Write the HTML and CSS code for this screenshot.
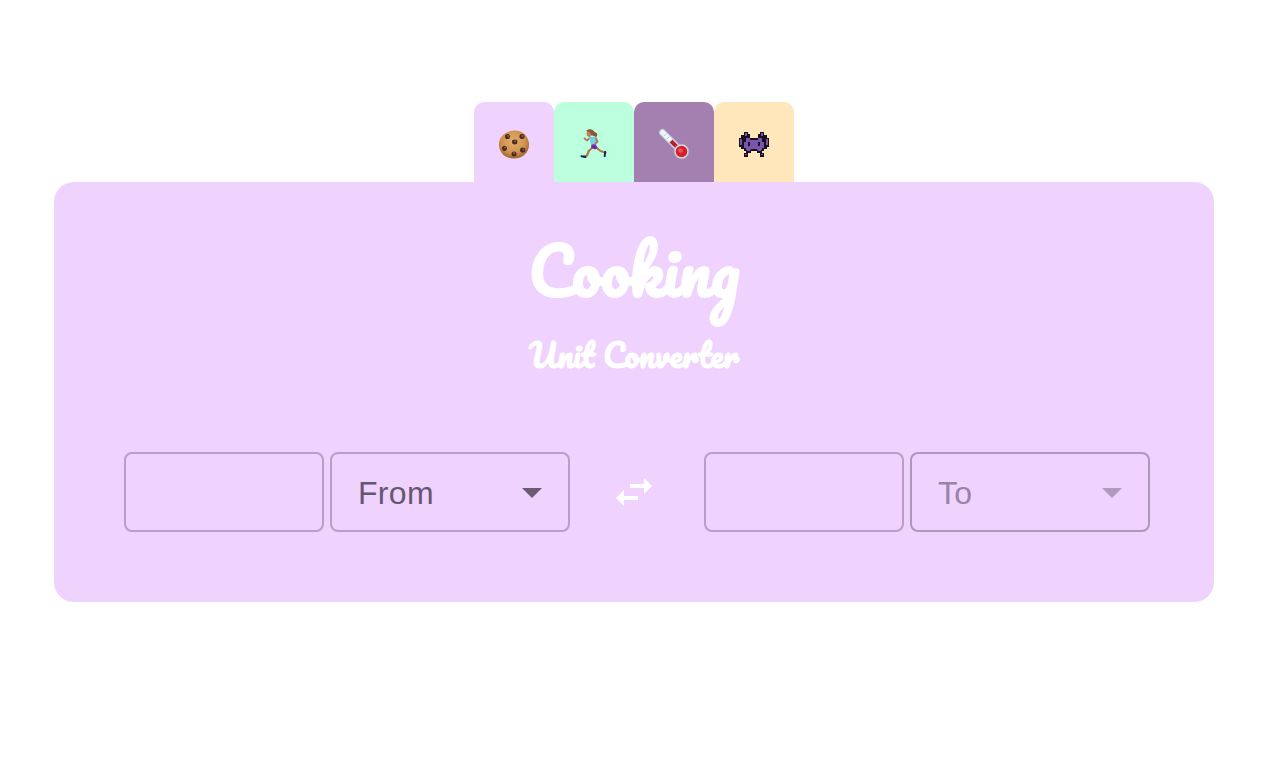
FILE: index.html
```html
<!DOCTYPE html>
<html lang="en">
<head>
<meta charset="utf-8">
<title>Unit Converter</title>
<link rel="stylesheet" href="styles.css">
</head>
<body>
<main class="app">
  <nav class="tabs">
    <button class="tab tab-cooking" aria-label="Cooking">
      <svg viewBox="0 0 40 40">
        <defs><radialGradient id="dough" cx=".48" cy=".4" r=".6"><stop offset="0" stop-color="#e2ae6c"/><stop offset=".65" stop-color="#d0934e"/><stop offset="1" stop-color="#a0642b"/></radialGradient></defs>
        <path fill="url(#dough)" d="M20 6.500C28 6 34.500 12 35 19.500C35.500 28 29 34.500 20 34.500C11 34.500 5 28.500 5 20.500C5 13 11 7 20 6.500Z"/>
        <g fill="#4a2a20"><ellipse cx="13.500" cy="12.500" rx="2.500" ry="2.600"/><ellipse cx="28" cy="12.500" rx="2.600" ry="2.500"/><ellipse cx="20.700" cy="18" rx="2.700" ry="2.400"/><ellipse cx="10.500" cy="24.300" rx="2.400" ry="2.600"/><ellipse cx="28.700" cy="26" rx="2.700" ry="2.600"/><ellipse cx="20" cy="30" rx="2.500" ry="2.500"/></g>
        <g fill="#806058"><circle cx="14" cy="12" r="1"/><circle cx="28.500" cy="12" r="1"/><circle cx="21" cy="17.300" r="1"/><circle cx="11" cy="23.500" r="1"/><circle cx="29.500" cy="25.500" r="1"/><circle cx="20" cy="29" r="1"/></g>
      </svg>
    </button>
    <button class="tab tab-speed" aria-label="Speed">
      <svg viewBox="0 0 40 40" fill="none" stroke-linecap="round" stroke-linejoin="round">
        <path stroke="#ae7852" stroke-width="1.700" d="M16 13.500L13.300 16.500L10.500 14.500"/>
        <path stroke="#ae7852" stroke-width="2.200" d="M19.500 23L15 26.500L13 31.500L10 32.500M21.500 23L26.500 27L31.500 28.500"/>
        <path fill="#6fd1ea" d="M15 13.500L21.500 12.500L22.500 20.500L17.200 21Z"/>
        <path fill="#7a25a5" d="M17.500 20.500L21.700 20.300L23.500 24L21 25.500L17 23.500Z"/>
        <path stroke="#b67d55" stroke-width="2" d="M22 14.500L23.500 17.500L21.500 19.500"/>
        <ellipse cx="15.300" cy="9.500" rx="2.700" ry="3.300" fill="#bd805b"/>
        <path fill="#8a543a" d="M12 7C15 4 19 5 20.500 8C23 8.500 24.500 10.500 22 13.500C21.500 11.500 18.500 12.500 17 10.500L16 8Z"/>
        <path stroke="#12245d" stroke-width="2" d="M7.500 32.200L11.500 33M31.200 28L30.700 32"/>
      </svg>
    </button>
    <button class="tab tab-temperature" aria-label="Temperature">
      <svg viewBox="0 0 40 40" fill="none" stroke-linecap="round">
        <path stroke="#bbc6d4" stroke-width="7" d="M8.500 8.500L26 26"/>
        <path stroke="#eef5f8" stroke-width="5.200" d="M8.500 8.500L24 24"/>
        <path stroke="#b51e2b" stroke-width="4" stroke-linecap="butt" d="M16.800 16.800L27 27"/>
        <path stroke="#abc1ce" stroke-width=".8" d="M10 12L12 10M13 15L15 13M16 18L18 16"/>
        <circle cx="27.500" cy="27.500" r="7.300" fill="#d8dce2" stroke="#a8b3c0" stroke-width=".6"/>
        <circle cx="27.500" cy="27.500" r="5.800" fill="#d4202d"/>
        <circle cx="26.500" cy="26.500" r="2.300" fill="#f0525a"/>
      </svg>
    </button>
    <button class="tab tab-data" aria-label="Data">
      <svg viewBox="0 0 40 40" shape-rendering="crispEdges">
        <g fill="#17131c">
          <path d="M10 8h4v6h-4zM26 8h4v6h-4zM14 10h2v4h-2zM24 10h2v4h-2z"/>
          <path d="M7 11h5v14h-5zM28 11h5v14h-5zM5 14h3v9h-3zM32 14h3v9h-3z"/>
          <path d="M10 14h20v13h-20zM12 27h5v2h-5zM23 27h5v2h-5zM10 29h4v4h-4zM26 29h4v4h-4z"/>
        </g>
        <g fill="#7955b0">
          <path d="M11 9h2v3h-2zM27 9h2v3h-2zM6 15h2v6h-2zM32 15h2v6h-2z"/>
          <path d="M12 14h4v3h-4zM24 14h4v3h-4zM12 16h16v10h-16zM10 18h2v6h-2zM28 18h2v6h-2z"/>
          <path d="M13 26h3v1h-3zM24 26h3v1h-3zM11 30h2v1h-2zM27 30h2v1h-2z"/>
        </g>
        <path fill="#17131c" d="M14 18h2v4h-2zM24 18h2v4h-2zM17 25h6v2h-6z"/>
      </svg>
    </button>
  </nav>
  <section class="panel">
    <header class="heading">
      <h1 class="title">Cooking</h1>
      <h2 class="subtitle">Unit Converter</h2>
    </header>
    <div class="converter">
      <div class="group">
        <input class="amount" type="text" aria-label="Amount to convert">
        <button class="unit">From<svg class="caret" viewBox="0 0 20 10"><path d="M0 0h20L10 10z"/></svg></button>
      </div>
      <svg class="swap" viewBox="0 0 36 28"><path d="M14 6H28V0L36 8L28 16V10H14ZM22 18H8V12L0 20L8 28V22H22Z"/></svg>
      <div class="group">
        <input class="amount" type="text" aria-label="Converted amount">
        <button class="unit unit-disabled" disabled>To<svg class="caret" viewBox="0 0 20 10"><path d="M0 0h20L10 10z"/></svg></button>
      </div>
    </div>
  </section>
</main>
</body>
</html>
```
FILE: styles.css
```css
* { box-sizing: border-box; }
body { margin: 0; background: #fff; }
button, input { font: inherit; margin: 0; }
.app {
  width: 1160px;
  margin-left: 54px;
  padding-top: 102px;
  font-family: "Liberation Sans", Arial, sans-serif;
}
.tabs { display: flex; justify-content: center; }
.tab {
  display: flex;
  align-items: center;
  justify-content: center;
  width: 80px;
  height: 80px;
  padding: 4px 0 0;
  border: 0;
  border-radius: 10px 10px 0 0;
}
.tab svg { flex: none; width: 40px; height: 40px; }
.tab-cooking { background: #efd2fe; }
.tab-speed { background: #bbffde; }
.tab-temperature { background: #a480b0; }
.tab-data { background: #ffe6bb; }
.panel {
  height: 420px;
  padding: 43px 64px 0 70px;
  border-radius: 20px;
  background: #efd2fe;
}
.heading {
  display: flex;
  flex-direction: column;
  align-items: center;
  height: 227px;
  padding-right: 6px;
  color: #fff;
  font-family: Pacifico, cursive;
  font-weight: 700;
  white-space: nowrap;
}
.title {
  margin: 0;
  font-size: 64px;
  font-weight: inherit;
  line-height: 90px;
}
.subtitle {
  margin: 15px 0 0;
  font-size: 32px;
  font-weight: inherit;
  line-height: 48px;
}
.converter { display: flex; align-items: center; justify-content: space-between; }
.group { display: flex; gap: 6px; }
.amount, .unit {
  height: 80px;
  border: 2px solid #b99fc5;
  border-radius: 8px;
  background: transparent;
}
.amount { width: 200px; padding: 0 26px; font-size: 32px; }
.unit {
  display: flex;
  align-items: center;
  justify-content: space-between;
  width: 240px;
  padding: 2px 26px 0;
  color: #665770;
  font-size: 32px;
  letter-spacing: .3px;
}
.caret { width: 20px; height: 10px; fill: #6b5c73; }
.unit-disabled { border-color: #ad98ba; color: #9984a7; }
.unit-disabled .caret { fill: #ae9abb; }
.swap { width: 36px; height: 28px; margin-left: -6px; fill: #fff; }
```
